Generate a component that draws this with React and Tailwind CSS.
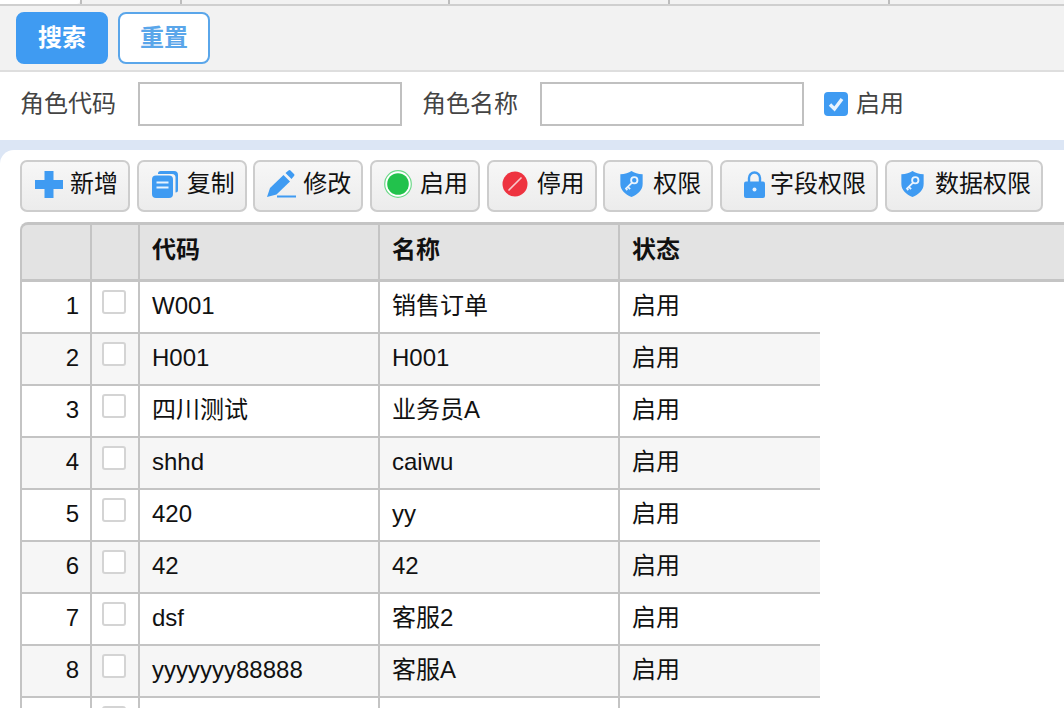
const font = { fontFamily: '"Liberation Sans", "Noto Sans CJK SC", sans-serif' };

const Plus = () => (
  <svg width="28" height="27" viewBox="0 0 28 27" className="shrink-0"><path d="M9.500 0h9v9h9.500v9h-9.500v9h-9v-9H0V9h9.500z" fill="#3f9bf2" /></svg>
);
const Copy = () => (
  <svg width="28" height="27" viewBox="0 0 28 27" className="shrink-0">
    <path d="M7 2.500A2.500 2.500 0 0 1 9.500 0H23a4 4 0 0 1 4 4v15a2.500 2.500 0 0 1-2.500 2.500V6.500A3.500 3.500 0 0 0 21 3H7z" fill="#3f9bf2" />
    <rect x="1" y="4.500" width="21" height="22.500" rx="4" fill="#3f9bf2" />
    <path d="M5.500 11.500h12M5.500 16.500h12" stroke="#e8f3fe" strokeWidth="2" />
  </svg>
);
const Pencil = () => (
  <svg width="30" height="28" viewBox="0 0 30 28" className="shrink-0">
    <path d="M0 27 3 18 16.500 5l6.500 6.500L9.500 24.500z" fill="#3f9bf2" />
    <path d="M18.500 3 21.500 0.500a1.500 1.500 0 0 1 2 0l3.500 3.500a1.500 1.500 0 0 1 0 2l-2.500 3z" fill="#3f9bf2" />
    <path d="M10 26.500h19" stroke="#3f9bf2" strokeWidth="2" />
  </svg>
);
const Green = () => (
  <svg width="28" height="28" viewBox="0 0 28 28" className="shrink-0">
    <circle cx="14" cy="14" r="13.300" fill="#fff" stroke="#6ed98a" strokeWidth="1.200" />
    <circle cx="14" cy="14" r="10.800" fill="#22c24c" />
  </svg>
);
const Red = () => (
  <svg width="26" height="26" viewBox="0 0 26 26" className="shrink-0">
    <circle cx="13" cy="13" r="12.500" fill="#ee3340" />
    <path d="M6.500 19.500 19.500 6.500" stroke="#f8c9cc" strokeWidth="1.600" />
  </svg>
);
const Shield = () => (
  <svg width="23" height="26" viewBox="0 0 24 28" className="shrink-0">
    <path d="M12 0c3 2 7 3.200 12 3.500V14c0 6.500-5 11-12 14C5 25 0 20.500 0 14V3.500C5 3.200 9 2 12 0z" fill="#3f9bf2" />
    <circle cx="15" cy="10" r="3.400" fill="none" stroke="#eaf4fe" strokeWidth="2" />
    <path d="M12.600 12.500 5.500 19.500M8 17l2.500 2.500M6 19l1.500 1.500" stroke="#eaf4fe" strokeWidth="2" fill="none" />
  </svg>
);
const Lock = () => (
  <svg width="21" height="27" viewBox="0 0 21 27" className="shrink-0">
    <path d="M5 12V7a5.500 5.500 0 0 1 11 0v5" fill="none" stroke="#3f9bf2" strokeWidth="2.400" />
    <rect x="0" y="10.500" width="21" height="16.500" rx="2" fill="#3f9bf2" />
    <circle cx="10.500" cy="18.500" r="2" fill="#eaf4fe" />
  </svg>
);

const tools = [
  { c: 'w-[110px] pl-[13px] gap-[7px]', icon: <Plus />, label: '新增' },
  { c: 'w-[110px] pl-[12px] gap-[8px]', icon: <Copy />, label: '复制' },
  { c: 'w-[110px] pl-[12px] gap-[6px]', icon: <Pencil />, label: '修改' },
  { c: 'w-[110px] pl-[12px] gap-[8px]', icon: <Green />, label: '启用' },
  { c: 'w-[110px] pl-[13px] gap-[9px]', icon: <Red />, label: '停用' },
  { c: 'w-[110px] pl-[15px] gap-[10px]', icon: <Shield />, label: '权限' },
  { c: 'w-[158px] pl-[22px] gap-[5px]', icon: <Lock />, label: '字段权限' },
  { c: 'w-[158px] pl-[14.500px] gap-[11px]', icon: <Shield />, label: '数据权限' },
];

const rows = [
  ['W001', '销售订单'],
  ['H001', 'H001'],
  ['四川测试', '业务员A'],
  ['shhd', 'caiwu'],
  ['420', 'yy'],
  ['42', '42'],
  ['dsf', '客服2'],
  ['yyyyyyy88888', '客服A'],
  ['', ''],
];

const Box = () => (
  <span className="block h-[24px] w-[24px] rounded-[3px] border-2 border-[#d4d4d4] bg-white" />
);

export default function App() {
  return (
    <div style={font} className="h-[708px] w-[1064px] overflow-hidden bg-white text-[24px] text-[#111]">
      <div className="flex h-[6px] border-b-2 border-[#cfcfcf] bg-[#f2f2f2]">
        <div className="h-[4px] w-[80px] rounded-br-[6px] bg-white" />
        <div className="w-[100px] border-l-2 border-[#bdbdbd]" />
        <div className="w-[268px] border-l-2 border-[#bdbdbd]" />
        <div className="w-[220px] border-l-2 border-[#bdbdbd]" />
        <div className="w-[220px] border-l-2 border-[#bdbdbd]" />
        <div className="flex-1 border-l-2 border-[#bdbdbd]" />
      </div>

      <div className="flex h-[66px] items-start gap-[10px] border-b-2 border-[#dedede] bg-[#f2f2f2] pl-[16px] pt-[6px]">
        <button className="h-[52px] w-[92px] rounded-[8px] border-2 border-[#3f9bf2] bg-[#3f9bf2] font-bold text-white">搜索</button>
        <button className="h-[52px] w-[92px] rounded-[8px] border-2 border-[#5aa6ea] bg-white font-bold text-[#5aa6ea]">重置</button>
      </div>

      <div className="flex h-[68px] items-start bg-white pl-[20px] pt-[10px] text-[#444]">
        <span className="flex h-[44px] w-[118px] items-center">角色代码</span>
        <span className="h-[44px] w-[264px] border-2 border-[#c0c0c0] bg-white" />
        <span className="flex h-[44px] w-[138px] items-center pl-[20px]">角色名称</span>
        <span className="h-[44px] w-[264px] border-2 border-[#c0c0c0] bg-white" />
        <span className="ml-[20px] flex h-[44px] items-center gap-[8px]">
          <span className="flex h-[24px] w-[24px] items-center justify-center rounded-[4px] bg-[#3f9bf2]">
            <svg width="18" height="18" viewBox="0 0 18 18"><path d="M3 9.500 7.500 14 15 4" fill="none" stroke="#e8f3fe" strokeWidth="3.400" /></svg>
          </span>
          启用
        </span>
      </div>

      <div className="h-[10px] bg-[#dce6f5]" />

      <div className="h-[558px] bg-[#dce6f5]">
        <div className="h-full rounded-tl-[14px] bg-white pl-[20px] pt-[10px]">
          <div className="flex h-[52px] gap-[6.670px]">
            {tools.map((t, i) => (
              <button
                key={i}
                className={`${t.c} flex h-[52px] items-center justify-start rounded-[7px] border-2 border-[#cdcdcd] bg-gradient-to-b from-[#f7f7f7] to-[#ececec] pb-[4px] text-[#111]`}
              >
                {t.icon}
                <span className="whitespace-nowrap">{t.label}</span>
              </button>
            ))}
          </div>

          <div className="mt-[10px]">
            <div className="flex h-[60px] rounded-tl-[8px] border-y-[3px] border-l-2 border-[#c4c4c4] bg-[#e3e3e3] font-bold">
              <div className="w-[70px] border-r-2 border-[#c4c4c4]" />
              <div className="w-[48px] border-r-2 border-[#c4c4c4]" />
              <div className="flex w-[240px] items-center border-r-2 border-[#c4c4c4] pb-[4px] pl-[12px]">代码</div>
              <div className="flex w-[240px] items-center border-r-2 border-[#c4c4c4] pb-[4px] pl-[12px]">名称</div>
              <div className="flex flex-1 items-center pb-[4px] pl-[12px]">状态</div>
            </div>
            {rows.map((r, i) => (
              <div key={i} className={`flex h-[52px] w-[800px] border-b-2 border-l-2 border-[#c4c4c4] ${i % 2 ? 'bg-[#f6f6f6]' : 'bg-white'}`}>
                <div className="flex w-[70px] items-center justify-end border-r-2 border-[#c4c4c4] pb-[2px] pr-[11px]">{i < 8 ? i + 1 : ''}</div>
                <div className="flex w-[48px] items-start justify-center border-r-2 border-[#c4c4c4] pr-[2px] pt-[8px]">
                  <Box />
                </div>
                <div className="flex w-[240px] items-center border-r-2 border-[#c4c4c4] pb-[2px] pl-[12px]">{r[0]}</div>
                <div className="flex w-[240px] items-center border-r-2 border-[#c4c4c4] pb-[2px] pl-[12px]">{r[1]}</div>
                <div className="flex flex-1 items-center pb-[2px] pl-[12px]">{i < 8 ? '启用' : ''}</div>
              </div>
            ))}
          </div>
        </div>
      </div>
    </div>
  );
}
